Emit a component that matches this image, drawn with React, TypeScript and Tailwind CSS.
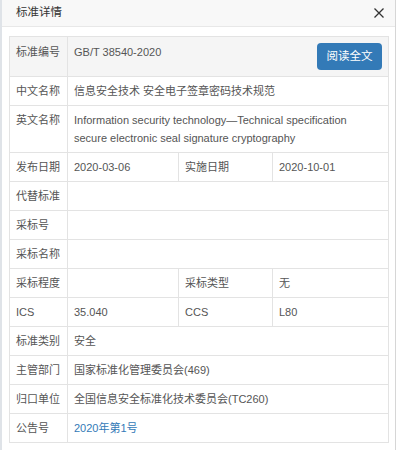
import type { JSX } from 'react';

const font = { fontFamily: '"Liberation Sans", "Noto Sans CJK SC", sans-serif' };

type Row =
  | { kind: 'wide'; label: string; value?: string; link?: boolean }
  | { kind: 'split'; label: string; value: string; label2: string; value2: string };

const ROWS: Row[] = [
  { kind: 'wide', label: '中文名称', value: '信息安全技术 安全电子签章密码技术规范' },
  {
    kind: 'wide',
    label: '英文名称',
    value: 'Information security technology—Technical specification secure electronic seal signature cryptography',
  },
  { kind: 'split', label: '发布日期', value: '2020-03-06', label2: '实施日期', value2: '2020-10-01' },
  { kind: 'wide', label: '代替标准' },
  { kind: 'wide', label: '采标号' },
  { kind: 'wide', label: '采标名称' },
  { kind: 'split', label: '采标程度', value: '', label2: '采标类型', value2: '无' },
  { kind: 'split', label: 'ICS', value: '35.040', label2: 'CCS', value2: 'L80' },
  { kind: 'wide', label: '标准类别', value: '安全' },
  { kind: 'wide', label: '主管部门', value: '国家标准化管理委员会(469)' },
  { kind: 'wide', label: '归口单位', value: '全国信息安全标准化技术委员会(TC260)' },
  { kind: 'wide', label: '公告号', value: '2020年第1号', link: true },
];

const cell = 'border border-[#e3e3e3] px-[6px] py-[5px] align-top leading-[18px] whitespace-nowrap';
const label = 'border border-[#e3e3e3] pl-[6px] pr-0 py-[5px] align-top leading-[18px] whitespace-nowrap h-[29px]';

export default function App(): JSX.Element {
  return (
    <div style={font} className="w-[396px] h-[450px] bg-white text-[11px] text-[#555] border-l-[2px] border-l-[#dfe3e8] border-r border-r-[#d6d6d6] overflow-hidden">
      <div className="h-[27px] flex items-center justify-between bg-[#f8f8f8] border-b border-[#e8e8e8] pl-[14px] pr-[10px]">
        <span className="text-[11.5px] text-[#333]">标准详情</span>
        <svg width="12" height="12" viewBox="0 0 12 12" className="text-[#333]">
          <path d="M1.5 1.5 L10.5 10.5 M10.5 1.5 L1.5 10.5" stroke="currentColor" strokeWidth="1.3" fill="none" />
        </svg>
      </div>
      <div className="pt-[9px] pl-[7px]">
        <table className="border-collapse w-[379px] table-fixed">
          <colgroup>
            <col className="w-[58px]" />
            <col className="w-[111px]" />
            <col className="w-[94px]" />
            <col className="w-[116px]" />
          </colgroup>
          <tbody>
            <tr className="bg-[#f5f5f5]">
              <td className="border border-[#e3e3e3] pl-[6px] pt-[6px] align-top leading-[18px] whitespace-nowrap">标准编号</td>
              <td colSpan={3} className="border border-[#e3e3e3] px-[6px] py-[6px] align-top">
                <div className="flex items-start justify-between">
                  <span className="leading-[18px]">GB/T 38540-2020</span>
                  <button
                    type="button"
                    className="h-[27px] w-[65px] rounded-[4px] bg-[#337ab7] text-white text-[11.5px] leading-none"
                  >
                    阅读全文
                  </button>
                </div>
              </td>
            </tr>
            {ROWS.map((r) =>
              r.kind === 'wide' ? (
                <tr key={r.label}>
                  <td className={label}>{r.label}</td>
                  <td
                    colSpan={3}
                    className={`border border-[#e3e3e3] px-[6px] py-[5px] align-top leading-[18px] ${r.link ? 'text-[#337ab7]' : ''}`}
                  >
                    {r.value ?? ''}
                  </td>
                </tr>
              ) : (
                <tr key={r.label}>
                  <td className={label}>{r.label}</td>
                  <td className={cell}>{r.value}</td>
                  <td className={cell}>{r.label2}</td>
                  <td className={cell}>{r.value2}</td>
                </tr>
              ),
            )}
          </tbody>
        </table>
      </div>
    </div>
  );
}
